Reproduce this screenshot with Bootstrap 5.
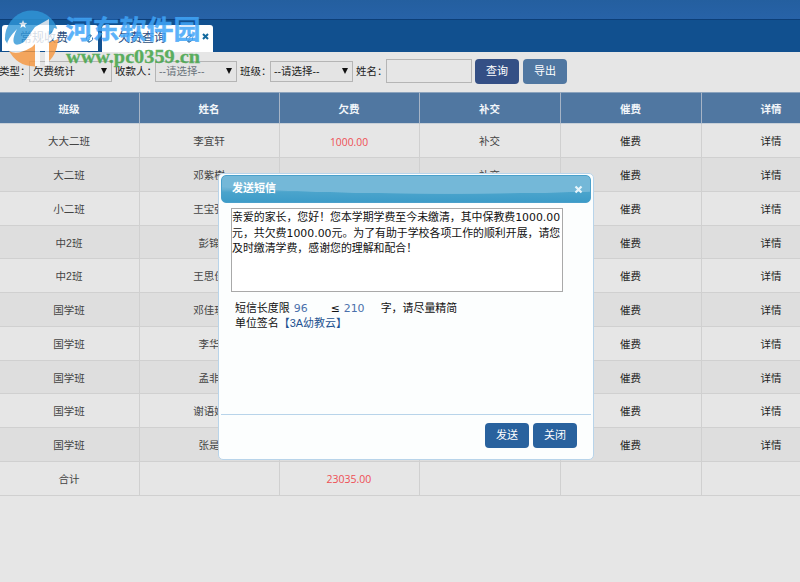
<!DOCTYPE html>
<html lang="zh-CN">
<head>
<meta charset="utf-8">
<meta name="viewport" content="width=device-width, initial-scale=1">
<title>欠费查询</title>
<link href="https://cdn.jsdelivr.net/npm/bootstrap@5.3.0/dist/css/bootstrap.min.css" rel="stylesheet">
<style>
body{font-family:"Liberation Sans","Noto Sans CJK SC",sans-serif;font-size:10.5px;background:#e6e6e6;color:#333;width:800px;height:582px;line-height:1.2}
.topbar{height:20px;background:linear-gradient(#245f9f,#2762a8);border-bottom:1px solid #0c3e78}
.tabstrip{height:32px;background:#11508f;padding-left:2px;gap:4px}
.tab-item{height:27px;background:#fff;border-radius:3px 3px 0 0;color:#2d4f80;font-size:12px}
.tab-first{width:96px;height:26px;padding-left:18px;margin-bottom:1px}
.tab-second{width:111px;padding-left:16px}
.tab-close{margin:0 4px 4px 8px}
.filters{height:40px;color:#222;padding-bottom:2px}
.filters label{flex:none;white-space:nowrap;margin-left:3px;width:30px}
.filters label:first-child{width:29px;margin-left:0;text-indent:-1px}
.filters .wide{width:40px}
.sel{width:83px;height:21px;border:1px solid #b5b5b5;background:#e4e4e4;padding:0 4px 0 3px}
.filters .payer{width:82px}
.txt{width:86px;height:24px;border:1px solid #b5b5b5;background:#e6e6e6}
.btn-x,.btn-x:hover{font-size:11px;line-height:1;padding:0;height:25px;width:44px;border-radius:4px;color:#fff;border:0;background:#29629e}
.query{background:#344f85;margin-left:3px}
.export{background:#5077a1;margin-left:4px}
.fees{width:842px;table-layout:fixed;text-align:center;border-collapse:separate;border-spacing:0}
.col-a{width:140px}.col-b{width:141px}
.fees th{height:32.4px;background:#5077a1;color:#f2f6fa;font-size:10.5px;padding:2px 1px 0 0;border-right:1px solid #a6b4c6;border-top:1px solid #8ba3bd;border-bottom:1px solid #c8d0d8}
.fees td{height:33.75px;border-right:1px solid #d0d0d0;border-bottom:1px solid #d0d0d0;color:#444;padding:2px 1px 0 0}
.fees td:last-child,.fees td:nth-child(5){color:#222}
.fees tr:nth-child(even) td{background:#dedede}
.fees .due{color:#ee4f55;font-family:"Open Sans","Noto Sans",sans-serif;font-size:10.3px}
.fees .total{font-size:10.5px}
.dlg{left:218px;top:173px;width:376px;height:287px;background:#fcfefe;border:1px solid #b8d4ea;border-radius:5px;padding:1px 2px;color:#111}
.dlg-head{height:28px;border-radius:5px;border:1px solid #4aa0cb;padding:0 7px 0 10px;color:#fff;font-size:11px;background:radial-gradient(ellipse 300px 18px at 62% 0,#74b8d8 97%,transparent 100%),linear-gradient(#78b9d8,#6ab2d4 50%,#4ba4cc 62%,#3d9cc8)}
.msg{width:332px;height:84px;margin:5px 0 0 10px;border:1px solid #a9a9a9;background:#fff;padding:1px 0 0;font-size:10.9px;line-height:15.6px;white-space:nowrap}
.num,.msg{font-family:"DejaVu Sans","Noto Sans CJK SC",sans-serif}
.hint{margin:9px 0 0 14px;line-height:15.4px;height:113px;font-size:10.95px}
.sms-now{width:37px;margin-left:4px;color:#4a70ab}
.sms-sign{width:13px;font-family:"DejaVu Sans",sans-serif}
.sms-max{width:37px;color:#4a70ab}
.sign{color:#1e5391}
.dlg-foot{border-top:1px solid #b8d4ea;padding:8px 14px;gap:4px}
.wm{left:0;top:0;pointer-events:none}
</style>
<script src="https://cdn.jsdelivr.net/npm/bootstrap@5.3.0/dist/js/bootstrap.bundle.min.js"></script>
</head>
<body class="overflow-hidden position-relative">
<header>
<div class="topbar"></div>
<nav class="tabstrip d-flex align-items-end">
<div class="tab-item tab-first d-flex align-items-center"><span>常规收费</span><svg class="ms-auto me-1" width="9" height="9" viewBox="0 0 9 9" fill="none" stroke="#286da8"><path d="M1.5 5.5a3 3 0 0 1 4.5-3.5M7.5 3.5a3 3 0 0 1-4.5 3.5M4.5 0L6.5 2 4.5 3.5M4.5 5.5L2.5 7l2 2"/></svg></div>
<div class="tab-item tab-second d-flex align-items-center"><span>欠费查询</span><svg class="ms-auto" width="9" height="9" viewBox="0 0 9 9" fill="none" stroke="#286da8"><path d="M1.5 5.5a3 3 0 0 1 4.5-3.5M7.5 3.5a3 3 0 0 1-4.5 3.5M4.5 0L6.5 2 4.5 3.5M4.5 5.5L2.5 7l2 2"/></svg><svg class="tab-close" width="7" height="7" viewBox="0 0 7 7" stroke="#12699e" stroke-width="2"><path d="M1 1l5 5M6 1L1 6"/></svg></div>
</nav>
</header>
<main class="overflow-hidden">
<form class="filters d-flex align-items-center">
<label>类型：</label><div class="sel d-flex align-items-center justify-content-between"><span>欠费统计</span><svg width="6" height="6"><path d="M0 0h6L3 6z" fill="#111"/></svg></div>
<label class="wide">收款人：</label><div class="sel payer d-flex align-items-center justify-content-between"><span class="text-secondary">--请选择--</span><svg width="6" height="6"><path d="M0 0h6L3 6z" fill="#111"/></svg></div>
<label>班级：</label><div class="sel d-flex align-items-center justify-content-between"><span>--请选择--</span><svg width="6" height="6"><path d="M0 0h6L3 6z" fill="#111"/></svg></div>
<label>姓名：</label><input class="txt" type="text" aria-label="姓名">
<button type="button" class="btn btn-x query">查询</button><button type="button" class="btn btn-x export">导出</button>
</form>
<table class="fees">
<colgroup><col class="col-a"><col class="col-a"><col class="col-a"><col class="col-b"><col class="col-b"><col class="col-a"></colgroup>
<thead><tr><th>班级</th><th>姓名</th><th>欠费</th><th>补交</th><th>催费</th><th>详情</th></tr></thead>
<tbody>
<tr><td>大大二班</td><td>李宜轩</td><td class="due">1000.00</td><td>补交</td><td>催费</td><td>详情</td></tr>
<tr><td>大二班</td><td>邓紫樹</td><td></td><td>补交</td><td>催费</td><td>详情</td></tr>
<tr><td>小二班</td><td>王宝强</td><td></td><td></td><td>催费</td><td>详情</td></tr>
<tr><td>中2班</td><td>彭锦</td><td></td><td></td><td>催费</td><td>详情</td></tr>
<tr><td>中2班</td><td>王思佳</td><td></td><td></td><td>催费</td><td>详情</td></tr>
<tr><td>国学班</td><td>邓佳玥</td><td></td><td></td><td>催费</td><td>详情</td></tr>
<tr><td>国学班</td><td>李华</td><td></td><td></td><td>催费</td><td>详情</td></tr>
<tr><td>国学班</td><td>孟非</td><td></td><td></td><td>催费</td><td>详情</td></tr>
<tr><td>国学班</td><td>谢语嫣</td><td></td><td></td><td>催费</td><td>详情</td></tr>
<tr><td>国学班</td><td>张是</td><td></td><td></td><td>催费</td><td>详情</td></tr>
<tr><td>合计</td><td></td><td class="due total">23035.00</td><td></td><td></td><td></td></tr>
</tbody></table>
</main>
<section class="dlg position-absolute" role="dialog" aria-label="发送短信">
<div class="dlg-head d-flex align-items-center justify-content-between"><b>发送短信</b><svg width="9" height="9" viewBox="0 0 9 9" stroke="#e8f5fb" stroke-width="2.2"><path d="M1.5 1.5l6 6M7.5 1.5l-6 6"/></svg></div>
<div class="msg">亲爱的家长，您好！您本学期学费至今未缴清，其中保教费1000.00<br>元，共欠费1000.00元。为了有助于学校各项工作的顺利开展，请您<br>及时缴清学费，感谢您的理解和配合！</div>
<div class="hint"><div class="d-flex"><span>短信长度限</span><span class="num sms-now">96</span><span class="sms-sign">≤</span><span class="num sms-max">210</span><span>字，请尽量精简</span></div><div class="d-flex"><span>单位签名</span><span class="sign">【3A幼教云】</span></div></div>
<div class="dlg-foot d-flex justify-content-end"><button type="button" class="btn btn-x">发送</button><button type="button" class="btn btn-x">关闭</button></div>
</section>
<!-- site logo laid over the top left corner -->
<svg class="wm position-absolute" width="210" height="75" viewBox="0 0 210 75">
<g opacity=".8">
<path d="M5 40a27 28 0 0 1 53-9L46 48H10z" fill="#2f97d8"/>
<path d="M8 49q12 6 25-4l7-9v30q-22 3-32-17zM45 44l13-5q-1 18-13 25z" fill="#f7963c"/>
<path d="M17 29Q2 44 9 51q8 5 23-4l3-3v22h5V50h5v15h4V42q12-8 9-13l-4-1q-1 5-5 7V19L35 27 24 42q-8 5-10 1-2-4 3-14z" fill="#fff"/>
<path d="M23 20l1.2 2.8 3 .2-2.3 1.900.8 3-2.7-1.600-2.600 1.600.8-3-2.300-1.900 3-.2z" fill="#fff"/>
</g>
<text x="65.5" y="38.5" textLength="135" lengthAdjust="spacingAndGlyphs" font-family="Noto Sans CJK SC,sans-serif" font-size="26" font-weight="700" fill="#40a5f8" stroke="#40a5f8" stroke-width=".4" opacity=".85">河东软件园</text>
<text x="66" y="63" textLength="134" lengthAdjust="spacingAndGlyphs" font-family="Liberation Serif,serif" font-size="19" font-weight="700" fill="#42a447" stroke="#42a447" stroke-width=".3" opacity=".85">www.pc0359.cn</text>
</svg>
</body>
</html>
